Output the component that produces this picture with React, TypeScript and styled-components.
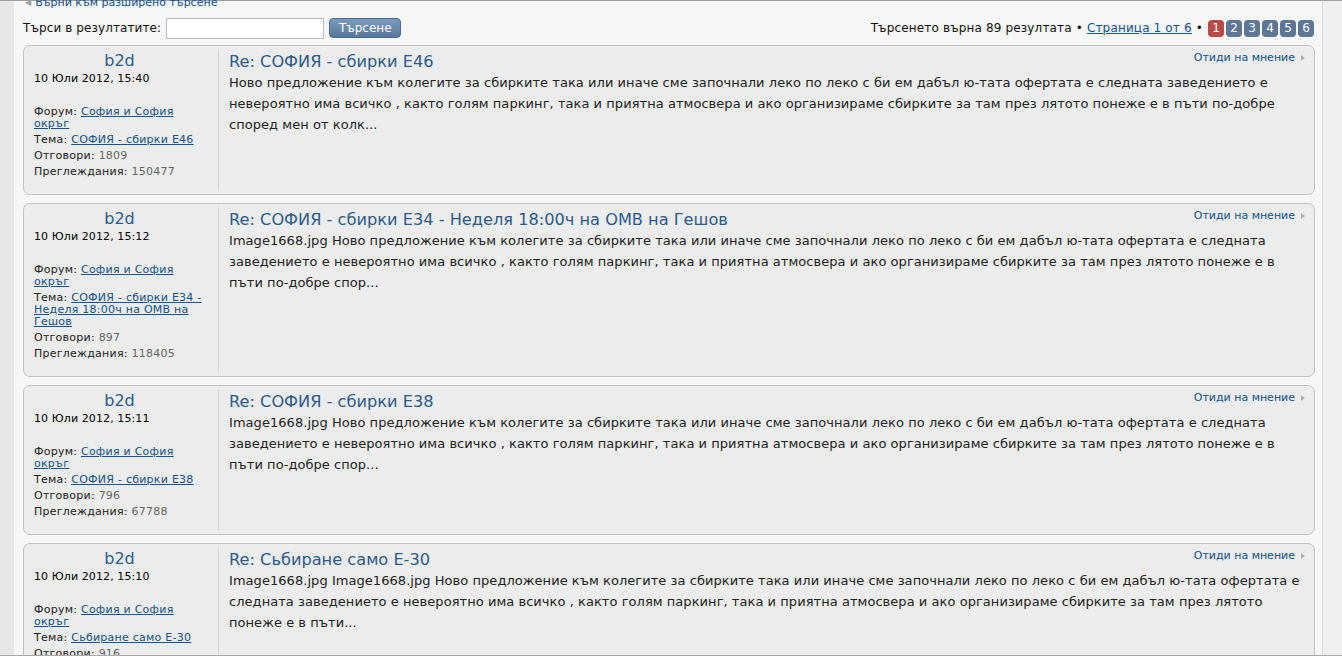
import React from "react";
import styled, { createGlobalStyle } from "styled-components";

const Global = createGlobalStyle`
  html, body { margin: 0; padding: 0; background: #ffffff; }
  body { font-family: "DejaVu Sans", Verdana, sans-serif; color: #222; }
  * { box-sizing: border-box; }
`;

const Frame = styled.div`
  height: 656px;
  overflow: hidden;
  display: flex;
  border-bottom: 1px solid #a8a8a8;
`;

const Gutter = styled.div<{ $w: number; $bg: string }>`
  flex: 0 0 ${(p) => p.$w}px;
  background: ${(p) => p.$bg};
  border-top: 1px solid #9c9c9c;
`;

const Panel = styled.div`
  width: 1309px;
  background: #f6f6f6;
  border-top: 1px solid #9c9c9c;
  border-right: 1px solid #dadada;
  padding: 0 7px 0 9px;
`;

const BackRow = styled.div`
  margin-top: -6px;
  height: 15px;
  padding-left: 2px;
  display: flex;
  align-items: center;
  gap: 4px;
  font-size: 11px;
  line-height: 15px;
`;

const Arrow = styled.span`
  color: #a0a0a0;
  font-size: 8px;
`;

const Link = styled.a`
  color: #105289;
  text-decoration: underline;
  cursor: pointer;
`;

const PlainLink = styled.a`
  color: #105289;
  text-decoration: none;
`;

const SearchRow = styled.div`
  height: 35px;
  display: flex;
  align-items: center;
  justify-content: space-between;
  font-size: 12px;
  padding-top: 1px;
`;

const SearchForm = styled.div`
  display: flex;
  align-items: center;
`;

const Label = styled.span`
  color: #111;
  margin-right: 5px;
  letter-spacing: 0.1px;
`;

const Input = styled.input`
  width: 158px;
  height: 21px;
  border: 1px solid #b4bac0;
  background: #fff;
  margin: 0 5px 0 0;
  padding: 0 3px;
`;

const Button = styled.button`
  width: 72px;
  height: 20px;
  border: 1px solid #4c6b8e;
  border-radius: 4px;
  background: linear-gradient(#7c9bbd, #57779b);
  color: #fff;
  font-family: "DejaVu Sans", Verdana, sans-serif;
  font-size: 12px;
  padding: 0;
`;

const Summary = styled.div`
  display: flex;
  align-items: center;
  color: #111;
  padding-right: 1px;
  letter-spacing: 0.15px;
`;

const Dot = styled.span`
  margin: 0 4px;
`;

const Pages = styled.div`
  display: flex;
  gap: 2px;
  margin-left: 1px;
  letter-spacing: 0;
`;

const PageBox = styled.span<{ $active?: boolean }>`
  width: 16px;
  height: 17px;
  border-radius: 4px;
  display: flex;
  align-items: center;
  justify-content: center;
  color: #fff;
  font-size: 12px;
  background: ${(p) => (p.$active ? "#b94a48" : "#5c7694")};
`;

const List = styled.div`
  display: flex;
  flex-direction: column;
  gap: 8px;
`;

const Post = styled.div`
  display: flex;
  background: #ececec;
  border: 1px solid #c2c2c2;
  border-radius: 7px;
  padding: 3px 10px 3px 0;
`;

const Meta = styled.div`
  flex: 0 0 195px;
  border-right: 1px solid #d6d6d6;
  padding: 2px 13px 13px 10px;
  font-size: 11px;
  letter-spacing: 0.25px;
`;

const Author = styled.div`
  text-align: center;
  font-size: 16px;
  line-height: 20px;
  color: #2d5a8a;
  letter-spacing: 0;
`;

const DateLine = styled.div`
  margin-top: 2px;
  line-height: 12px;
  color: #000;
  margin-bottom: 21px;
  letter-spacing: 0.1px;
`;

const Item = styled.div`
  line-height: 12px;
  color: #222;
  & + & { margin-top: 4px; }
`;

const Value = styled.span`
  color: #666;
`;

const Content = styled.div`
  flex: 1;
  padding: 3px 0 0 10px;
`;

const Head = styled.div`
  display: flex;
  justify-content: space-between;
  align-items: flex-start;
`;

const Title = styled.a`
  font-family: "DejaVu Sans", "Trebuchet MS", sans-serif;
  font-size: 16.2px;
  line-height: 20px;
  color: #2d5a8a;
  text-decoration: none;
`;

const Jump = styled.div`
  display: flex;
  align-items: center;
  gap: 6px;
  font-size: 11px;
  line-height: 14px;
  margin-top: -1px;
  margin-right: -1px;
`;

const Tri = styled.span`
  width: 0;
  height: 0;
  border-left: 4px solid #b0b0b0;
  border-top: 3px solid transparent;
  border-bottom: 3px solid transparent;
`;

const Body = styled.div`
  font-size: 13px;
  line-height: 21px;
  color: #222;
  margin-top: 0;
  padding-right: 0;
  letter-spacing: 0.05px;
`;

type P = {
  title: string;
  date: string;
  topic: string;
  replies: string;
  views: string;
  text: string;
};

const base =
  "Ново предложение към колегите за сбирките така или иначе сме започнали леко по леко с би ем дабъл ю-тата офертата е следната заведението е невероятно има всичко , както голям паркинг, така и приятна атмосвера и ако организираме сбирките за там през лятото понеже е в пъти";

const posts: P[] = [
  {
    title: "Re: СОФИЯ - сбирки E46",
    date: "10 Юли 2012, 15:40",
    topic: "СОФИЯ - сбирки E46",
    replies: "1809",
    views: "150477",
    text: base + " по-добре според мен от колк...",
  },
  {
    title: "Re: СОФИЯ - сбирки E34 - Неделя 18:00ч на ОМВ на Гешов",
    date: "10 Юли 2012, 15:12",
    topic: "СОФИЯ - сбирки E34 - Неделя 18:00ч на ОМВ на Гешов",
    replies: "897",
    views: "118405",
    text: "Image1668.jpg " + base + " по-добре спор...",
  },
  {
    title: "Re: СОФИЯ - сбирки E38",
    date: "10 Юли 2012, 15:11",
    topic: "СОФИЯ - сбирки E38",
    replies: "796",
    views: "67788",
    text: "Image1668.jpg " + base + " по-добре спор...",
  },
  {
    title: "Re: Сьбиране само E-30",
    date: "10 Юли 2012, 15:10",
    topic: "Сьбиране само E-30",
    replies: "916",
    views: "98431",
    text: "Image1668.jpg Image1668.jpg " + base + "...",
  },
];

export default function App() {
  return (
    <>
      <Global />
      <Frame>
        <Gutter $w={14} $bg="#e7e7e7" />
        <Panel>
          <BackRow>
            <Arrow>◀</Arrow>
            <PlainLink>Върни към разширено търсене</PlainLink>
          </BackRow>
          <SearchRow>
            <SearchForm>
              <Label>Търси в резултатите:</Label>
              <Input />
              <Button>Търсене</Button>
            </SearchForm>
            <Summary>
              Търсенето върна 89 резултата
              <Dot>•</Dot>
              <Link>Страница 1 от 6</Link>
              <Dot>•</Dot>
              <Pages>
                {[1, 2, 3, 4, 5, 6].map((n) => (
                  <PageBox key={n} $active={n === 1}>
                    {n}
                  </PageBox>
                ))}
              </Pages>
            </Summary>
          </SearchRow>
          <List>
            {posts.map((p) => (
              <Post key={p.title}>
                <Meta>
                  <Author>b2d</Author>
                  <DateLine>{p.date}</DateLine>
                  <Item>
                    Форум: <Link>София и София окръг</Link>
                  </Item>
                  <Item>
                    Тема: <Link>{p.topic}</Link>
                  </Item>
                  <Item>
                    Отговори: <Value>{p.replies}</Value>
                  </Item>
                  <Item>
                    Преглеждания: <Value>{p.views}</Value>
                  </Item>
                </Meta>
                <Content>
                  <Head>
                    <Title>{p.title}</Title>
                    <Jump>
                      <PlainLink>Отиди на мнение</PlainLink>
                      <Tri />
                    </Jump>
                  </Head>
                  <Body>{p.text}</Body>
                </Content>
              </Post>
            ))}
          </List>
        </Panel>
        <Gutter $w={19} $bg="#efefef" />
      </Frame>
    </>
  );
}
